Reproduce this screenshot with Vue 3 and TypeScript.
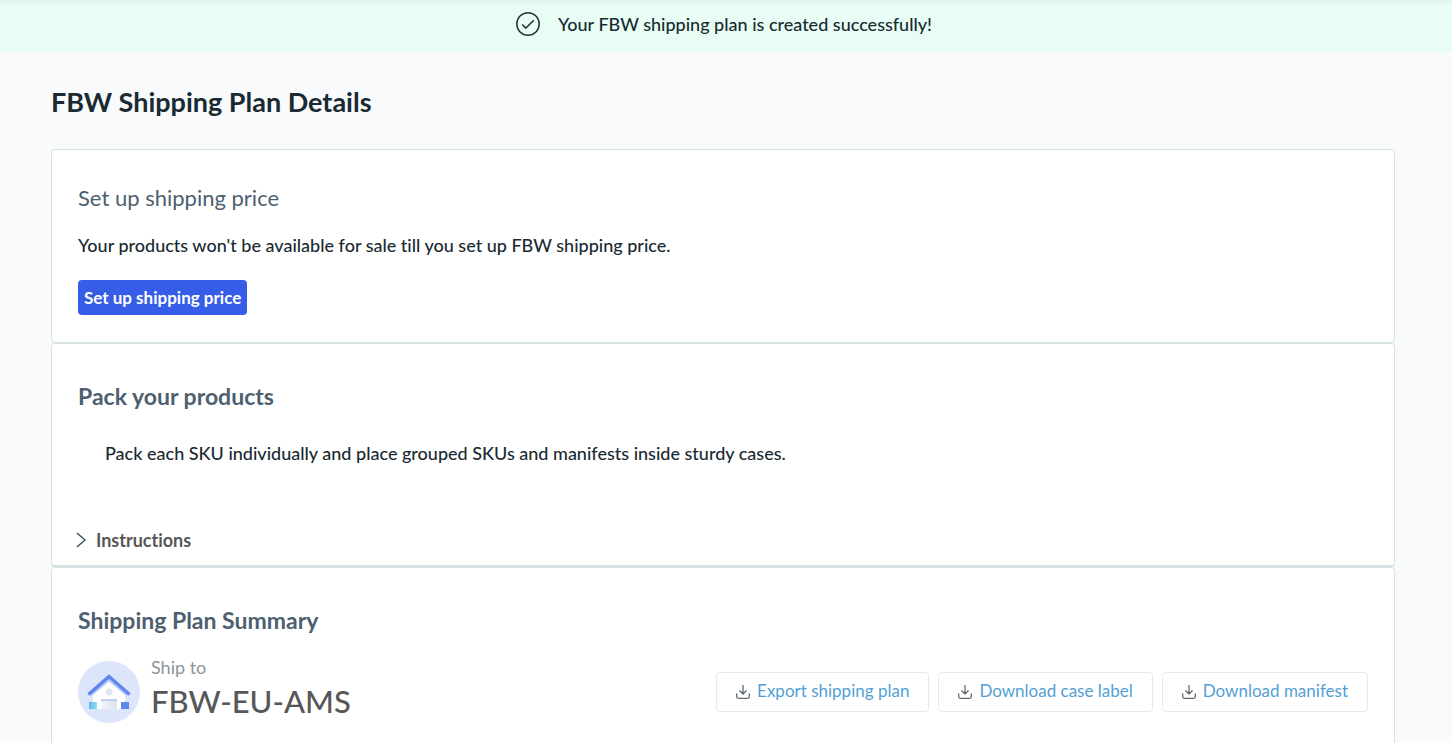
<script setup lang="ts">
import { ref } from 'vue'

const instructionsOpen = ref(false)
const downloads: string[] = ['Export shipping plan', 'Download case label', 'Download manifest']
</script>

<template>
  <div class="page">
    <div class="banner" role="status">
      <svg class="banner-icon" viewBox="0 0 24 24" aria-hidden="true">
        <circle cx="12" cy="12" r="11.2" />
        <path d="M6.200 12.400l3.600 3.700 8-7.900" />
      </svg>
      <span>Your FBW shipping plan is created successfully!</span>
    </div>

    <main class="content">
      <h1 class="title">FBW Shipping Plan Details</h1>

      <section class="card price">
        <h2 class="heading light">Set up shipping price</h2>
        <p class="text">Your products won't be available for sale till you set up FBW shipping price.</p>
        <button type="button" class="primary">Set up shipping price</button>
      </section>

      <section class="card pack">
        <h2 class="heading">Pack your products</h2>
        <p class="text indented">Pack each SKU individually and place grouped SKUs and manifests inside sturdy cases.</p>
        <button
          type="button"
          class="toggle"
          :aria-expanded="instructionsOpen"
          @click="instructionsOpen = !instructionsOpen"
        >
          <svg class="chevron" :class="{ open: instructionsOpen }" viewBox="0 0 10 16" aria-hidden="true">
            <path d="M1 1l8 7-8 7" />
          </svg>
          <span>Instructions</span>
        </button>
      </section>

      <section class="card summary">
        <h2 class="heading">Shipping Plan Summary</h2>
        <div class="row">
          <div class="destination">
            <svg class="warehouse" viewBox="0 0 62 62" aria-hidden="true">
              <defs>
                <linearGradient id="crate" x1="0" x2="1">
                  <stop offset="0" stop-color="#5bb8ea" />
                  <stop offset="1" stop-color="#8fdcf5" />
                </linearGradient>
                <linearGradient id="door" x1="0" x2="1">
                  <stop offset="0" stop-color="#f1f4f6" />
                  <stop offset="1" stop-color="#dbe4ec" />
                </linearGradient>
              </defs>
              <circle cx="31" cy="31" r="31" fill="#dde5fb" />
              <path d="M15 48V31L31 18l16 13v17z" fill="#fff" />
              <path d="M13 33.500L31 18.500l18 15" fill="none" stroke="#b9cafa" stroke-width="3" />
              <path d="M10.500 33.500L31 15.500l20.500 18" fill="none" stroke="#5f86ec" stroke-width="3.400" />
              <circle cx="31" cy="31" r="3.500" fill="#dfe7ea" />
              <path d="M23 38h16v10H23z" fill="url(#door)" />
              <path d="M23 38h16v2H23z" fill="#c0cff8" />
              <path d="M11 41h8v7h-8z" fill="url(#crate)" />
              <path d="M43 41h8v7h-8z" fill="#5f86ec" />
            </svg>
            <div class="address">
              <div class="label">Ship to</div>
              <div class="code">FBW-EU-AMS</div>
            </div>
          </div>
          <div class="actions">
            <button v-for="name in downloads" :key="name" type="button" class="secondary">
              <svg class="download" viewBox="0 0 14 14" aria-hidden="true">
                <path d="M7 0v8.500M3.500 5.500L7 9l3.500-3.500M.7 8.500v3.300q0 1.500 1.500 1.500h9.600q1.500 0 1.500-1.500V8.500" />
              </svg>
              <span>{{ name }}</span>
            </button>
          </div>
        </div>
      </section>
    </main>
  </div>
</template>

<style>
body {
  margin: 0;
}
</style>

<style scoped>
.page {
  display: flex;
  flex-direction: column;
  min-height: 100vh;
  background: #f9fafc;
  color: #192a32;
  font-family: Lato, "Open Sans", sans-serif;
  font-size: 18px;
  font-weight: 500;
  font-variant-ligatures: none;
  line-height: 24px;
}
.banner {
  display: flex;
  align-items: center;
  justify-content: center;
  gap: 18px;
  box-sizing: border-box;
  height: 52px;
  padding: 0 4px 4px 0;
  background: linear-gradient(#e0f5ea, #e8fef5 5px);
}
.banner-icon {
  width: 24px;
  height: 24px;
  fill: none;
  stroke: #22343c;
  stroke-width: 1.5;
}
.content {
  display: flex;
  flex: 1;
  flex-direction: column;
  padding: 32px 57px 0 51px;
}
.title {
  margin: 0 0 29px;
  font-size: 27px;
  font-weight: 700;
  line-height: 36px;
}
.card {
  display: flex;
  flex-direction: column;
  align-items: flex-start;
  padding: 0 26px;
  border: 1px solid #d8e2e5;
  border-radius: 4px;
  background: #fff;
}
.heading {
  margin: 0;
  color: #4e5f70;
  font-size: 23px;
  font-weight: 700;
  line-height: 32px;
}
.light {
  font-size: 22px;
  font-weight: 400;
}
.text {
  margin: 0;
}
.price {
  gap: 19px;
  padding-top: 32px;
  padding-bottom: 27px;
}
.primary {
  height: 35px;
  margin-top: 4px;
  padding: 0 6px;
  border: 0;
  border-radius: 4px;
  background: #365de8;
  color: #fff;
  font: inherit;
  font-size: 17px;
  font-weight: 700;
}
.pack {
  padding-top: 36px;
  padding-bottom: 13px;
  border-bottom-width: 2px;
}
.indented {
  padding: 29px 27px 63px;
}
.toggle {
  display: flex;
  align-items: center;
  gap: 10px;
  margin-left: -2px;
  padding: 0;
  border: 0;
  background: none;
  color: #575757;
  font: inherit;
  font-weight: 700;
}
.chevron {
  width: 10px;
  height: 16px;
  fill: none;
  stroke: #3f4f5b;
  stroke-width: 1.5;
}
.chevron.open {
  transform: rotate(90deg);
}
.summary {
  flex: 1;
  padding-top: 36px;
  padding-bottom: 14px;
  border-bottom: 0;
  border-radius: 4px 4px 0 0;
}
.row {
  display: flex;
  align-items: center;
  align-self: stretch;
  justify-content: space-between;
  margin-top: 19px;
}
.destination {
  display: flex;
  align-items: center;
  gap: 11px;
}
.warehouse {
  width: 62px;
  height: 62px;
}
.address {
  padding-bottom: 6px;
}
.label {
  color: #8a949a;
  font-weight: 400;
}
.code {
  color: #575757;
  font-size: 31px;
  line-height: 44px;
}
.actions {
  display: flex;
  gap: 9px;
}
.secondary {
  display: flex;
  align-items: center;
  gap: 7px;
  height: 40px;
  padding: 0 19px 2px;
  border: 1px solid #e4eaef;
  border-radius: 4px;
  background: #fff;
  color: #539fd4;
  font: inherit;
  font-size: 17px;
  font-weight: 400;
}
.download {
  width: 14px;
  height: 14px;
  margin-top: 2px;
  fill: none;
  stroke: #5f6b74;
  stroke-width: 1.3;
}
</style>
